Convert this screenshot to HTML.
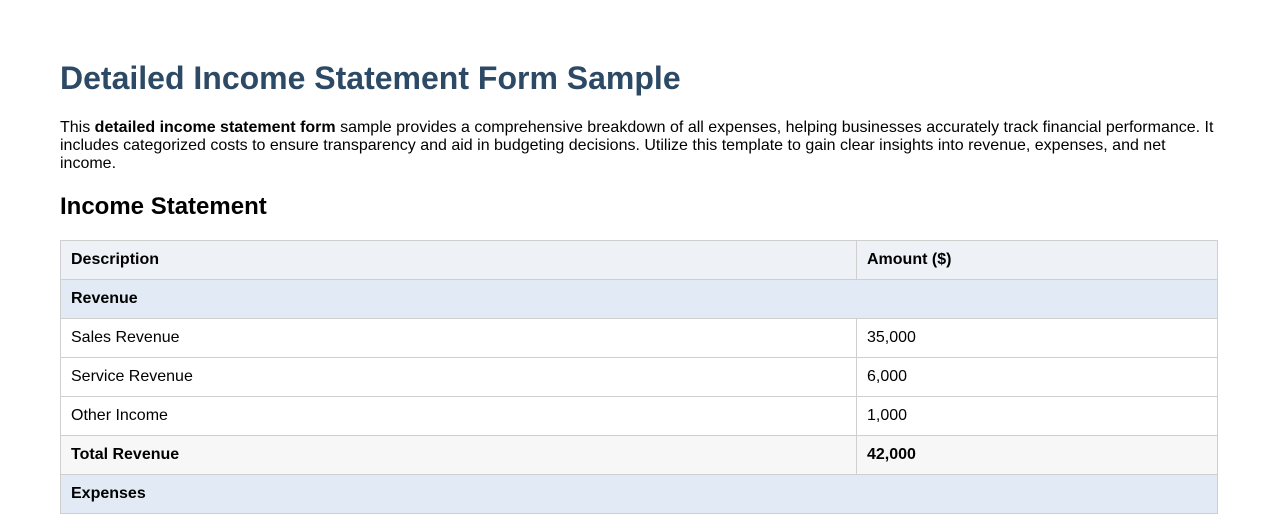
<!DOCTYPE html>
<html><head><style>
body{margin:0;padding:0 60px;font-family:"Liberation Sans",Arial,sans-serif;color:#000;background:#fff;width:1158px}
h1{font-size:32px;color:#2c4a66;margin:0;padding-top:59px;line-height:38px}
p{font-size:16px;line-height:18px;margin:22px 0 0}
h2{font-size:24px;margin:20px 0 0;line-height:28px}
table{border-collapse:collapse;width:1158px;margin-top:19px;font-size:16px}
td,th{border:1px solid #cfcfcf;padding:0 10px;height:38px;text-align:left}
th{background:#eef2f7;font-weight:bold}
.sec td{background:#e2eaf5;font-weight:bold}
.tot td{background:#f7f7f7;font-weight:bold}
</style></head><body>
<h1>Detailed Income Statement Form Sample</h1>
<p>This <b>detailed income statement form</b> sample provides a comprehensive breakdown of all expenses, helping businesses accurately track financial performance. It includes categorized costs to ensure transparency and aid in budgeting decisions. Utilize this template to gain clear insights into revenue, expenses, and net income.</p>
<h2>Income Statement</h2>
<table>
<tr><th style="width:775px">Description</th><th>Amount ($)</th></tr>
<tr class="sec"><td colspan="2">Revenue</td></tr>
<tr><td>Sales Revenue</td><td>35,000</td></tr>
<tr><td>Service Revenue</td><td>6,000</td></tr>
<tr><td>Other Income</td><td>1,000</td></tr>
<tr class="tot"><td>Total Revenue</td><td>42,000</td></tr>
<tr class="sec"><td colspan="2">Expenses</td></tr>
</table>
</body></html>
